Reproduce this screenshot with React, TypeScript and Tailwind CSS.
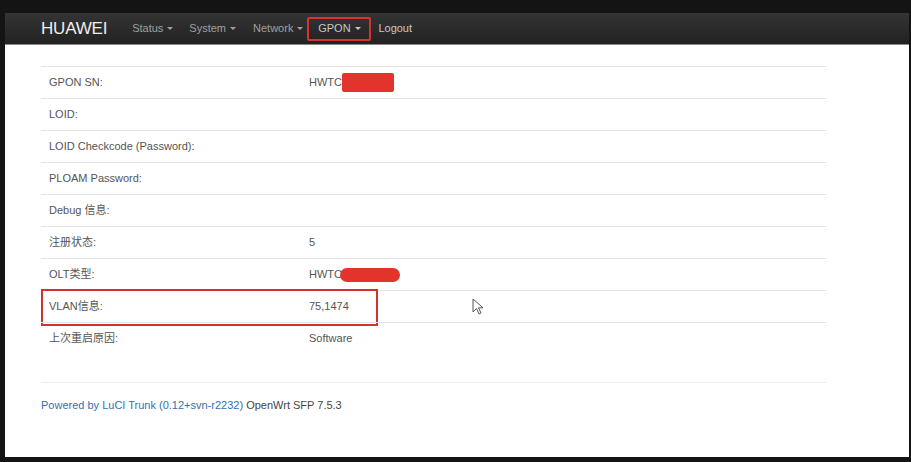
import React from "react";

const rows: { label: string; value?: React.ReactNode; mark?: boolean }[] = [
  {
    label: "GPON SN:",
    value: (
      <span className="flex items-center">
        HWTC:
        <span className="inline-block w-[52px] h-[19px] bg-[#e3342b] rounded-[2px] -ml-[3px]" />
      </span>
    ),
  },
  { label: "LOID:" },
  { label: "LOID Checkcode (Password):" },
  { label: "PLOAM Password:" },
  { label: "Debug 信息:" },
  { label: "注册状态:", value: "5" },
  {
    label: "OLT类型:",
    value: (
      <span className="flex items-center">
        HWTC
        <span className="inline-block w-[60px] h-[14px] bg-[#e3342b] rounded-[7px] -ml-[2px]" />
      </span>
    ),
  },
  { label: "VLAN信息:", value: "75,1474", mark: true },
  { label: "上次重启原因:", value: "Software" },
];

function Caret() {
  return <span className="inline-block ml-[4px] mb-[1px] border-x-[3px] border-x-transparent border-t-[3px] border-t-current align-middle" />;
}

export default function App() {
  return (
    <div
      className="w-[911px] h-[462px] bg-[#141414] pt-[13px] pl-[5px] pr-[2px] pb-[5px]"
      style={{ fontFamily: '"Liberation Sans", Arial, "Noto Sans CJK SC", sans-serif' }}
    >
      <div className="h-full bg-white flex flex-col">
        <nav className="h-[32px] bg-gradient-to-b from-[#343434] to-[#222] border-b border-b-[#888] flex items-center text-[11px]">
          <span className="ml-[36px] text-[17px] text-[#eee] tracking-[-0.2px]">HUAWEI</span>
          <div className="flex items-center ml-[25px] text-[#a0a0a0]">
            <span>Status<Caret /></span>
            <span className="ml-[16px]">System<Caret /></span>
            <span className="ml-[17px]">Network<Caret /></span>
            <span className="ml-[4px] h-[24px] w-[64px] border-2 border-[#d7342e] rounded-[2px] flex items-center justify-center text-[#c8c8c8]">
              GPON<Caret />
            </span>
            <span className="ml-[7px] text-[#c8c8c8]">Logout</span>
          </div>
        </nav>

        <main className="px-[36px] pt-[21px]">
          <div className="w-[786px] text-[11px] text-[#555]">
            {rows.map((r) => (
              <div key={r.label} className="relative h-[32px] border-t border-t-[#e4e4e4] flex items-center">
                <span className="pl-[8px] w-[268px]">{r.label}</span>
                <span>{r.value}</span>
                {r.mark && (
                  <>
                    <div className="absolute left-0 top-[-2px] w-[337px] h-[37px] border-2 border-[#d2312f]" />
                    <svg className="absolute left-[431px] top-[7px]" width="13" height="18" viewBox="0 0 13 18">
                      <path d="M1 1 L1 14 L4.5 10.5 L7 16 L9 15 L6.5 9.8 L11 9.8 Z" fill="#fff" stroke="#555" strokeWidth="1" strokeLinejoin="round" />
                    </svg>
                  </>
                )}
              </div>
            ))}
            <div className="mt-[28px] border-t border-t-[#eee]" />
            <div className="mt-[14px] text-[11px]">
              <span className="text-[#336fb7]">Powered by LuCI Trunk (0.12+svn-r2232)</span>{" "}
              <span className="text-[#444]">OpenWrt SFP 7.5.3</span>
            </div>
          </div>
        </main>
      </div>
    </div>
  );
}
